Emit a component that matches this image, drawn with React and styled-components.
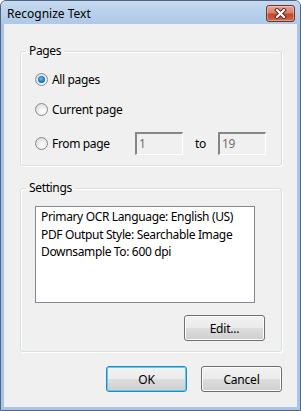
import React from 'react';
import styled, { createGlobalStyle } from 'styled-components';

const GlobalStyle = createGlobalStyle`
  html, body {
    margin: 0;
    padding: 0;
    background: #ffffff;
  }
  body {
    font-family: "Noto Sans", "Liberation Sans", sans-serif;
    font-size: 12px;
    letter-spacing: -0.35px;
    color: #000;
  }
`;

const Window = styled.div`
  box-sizing: border-box;
  width: 301px;
  height: 411px;
  display: flex;
  flex-direction: column;
  border: 1px solid #52677f;
  border-radius: 6px 6px 0 0;
  background: #a9c4e4;
  overflow: hidden;
`;

const TitleBar = styled.div`
  height: 23px;
  flex: none;
  display: flex;
  align-items: flex-start;
  padding: 0 5px 0 6px;
  background: linear-gradient(#c6daf0, #aec8e6);
`;

const Title = styled.div`
  margin-top: 5px;
  font-size: 12px;
  line-height: 16px;
  letter-spacing: 0;
  color: #000;
`;

const CloseButton = styled.button`
  margin: 4px 0 0 auto;
  width: 29px;
  height: 17px;
  padding: 0;
  border: 1px solid #6f342b;
  border-radius: 3px;
  background: linear-gradient(#e6a593 0%, #d77f69 45%, #c4452c 55%, #cf6a50 100%);
  box-shadow: inset 0 0 0 1px rgba(255, 255, 255, 0.35);
  display: flex;
  align-items: center;
  justify-content: center;
`;

const Client = styled.div`
  flex: 1;
  margin: 0 3px 3px 3px;
  padding: 19px 15px 0 16px;
  background: #f0f0f0;
  display: flex;
  flex-direction: column;
`;

const Group = styled.fieldset`
  margin: 0 0 ${p => p.$gap || 0}px 0;
  padding: 0 ${p => p.$padRight || 0}px ${p => p.$padBottom}px 14px;
  border: 1px solid #d5dfe5;
  border-radius: 3px;
  box-shadow: inset 1px 1px 0 #fff, 1px 1px 0 #fff;
  min-width: 0;
`;

// the fieldset's left padding would push the caption inward; pull it back
const Legend = styled.legend`
  margin-left: -9px;
  padding: 0 3px;
  font-size: 12px;
  line-height: 16px;
`;

const Row = styled.div`
  display: flex;
  align-items: center;
  height: ${p => p.$h}px;
  margin-top: ${p => p.$top}px;
`;

const Radio = styled.span`
  box-sizing: border-box;
  width: 13px;
  height: 13px;
  flex: none;
  border-radius: 50%;
  border: 1px solid #8a8b8b;
  background: radial-gradient(circle at 60% 65%, #ffffff 0%, #f1f1f1 35%, #cfcfcf 100%);
  display: flex;
  align-items: center;
  justify-content: center;

  &::after {
    content: '';
    display: ${p => (p.$checked ? 'block' : 'none')};
    width: 7px;
    height: 7px;
    border-radius: 50%;
    background: radial-gradient(circle at 45% 40%, #6fc3f5 0%, #1b86c9 45%, #0b4c86 100%);
  }
`;

const RadioText = styled.span`
  margin-left: 4px;
  width: ${p => (p.$w ? `${p.$w}px` : 'auto')};
  flex: none;
`;

const PageInput = styled.div`
  box-sizing: border-box;
  width: 48px;
  height: 23px;
  padding: 2px 0 0 2px;
  border-style: solid;
  border-width: 2px 1px 1px 2px;
  border-color: #868686 #ffffff #ffffff #868686;
  background: #f0f0f0;
  color: #7a6d6d;
  line-height: 16px;
`;

const ToText = styled.span`
  width: 35px;
  text-align: center;
`;

const ListBox = styled.div`
  box-sizing: border-box;
  width: 220px;
  height: 97px;
  margin-top: 10px;
  padding: 1px 5px;
  border: 1px solid #828790;
  background: #fff;
  line-height: 17.5px;
`;

const EditRow = styled.div`
  display: flex;
  justify-content: flex-end;
  margin-top: 12px;
  padding-right: 2px;
`;

const Button = styled.button`
  box-sizing: border-box;
  width: 81px;
  height: 26px;
  padding: 0;
  font-family: "Noto Sans", "Liberation Sans", sans-serif;
  font-size: 12px;
  letter-spacing: -0.2px;
  color: #000;
  border: 1px solid ${p => (p.$default ? '#3c7fb1' : '#707070')};
  border-radius: 3px;
  background: linear-gradient(#f2f2f2 0%, #ebebeb 50%, #dddddd 51%, #cfcfcf 100%);
  box-shadow: inset 0 0 0 1px ${p => (p.$default ? '#48d5fd' : '#fcfcfc')};
`;

const ButtonRow = styled.div`
  display: flex;
  justify-content: flex-end;
  gap: 14px;
  margin-top: 14px;
`;

function CloseGlyph() {
  return (
    <svg width="13" height="11" viewBox="0 0 13 11">
      <path d="M3 2 L10 9 M10 2 L3 9" stroke="#5a2219" strokeWidth="4" strokeLinecap="square" />
      <path d="M3 2 L10 9 M10 2 L3 9" stroke="#ffffff" strokeWidth="2.2" strokeLinecap="square" />
    </svg>
  );
}

const App = () => {
  return (
    <>
      <GlobalStyle />
      <Window>
        <TitleBar>
          <Title>Recognize Text</Title>
          <CloseButton aria-label="Close">
            <CloseGlyph />
          </CloseButton>
        </TitleBar>
        <Client>
          <Group $padBottom={10} $gap={14}>
            <Legend>Pages</Legend>
            <Row $h={16} $top={12}>
              <Radio $checked />
              <RadioText>All pages</RadioText>
            </Row>
            <Row $h={16} $top={14}>
              <Radio />
              <RadioText>Current page</RadioText>
            </Row>
            <Row $h={23} $top={15}>
              <Radio />
              <RadioText $w={83}>From page</RadioText>
              <PageInput>1</PageInput>
              <ToText>to</ToText>
              <PageInput>19</PageInput>
            </Row>
          </Group>
          <Group $padBottom={10} $padRight={14}>
            <Legend>Settings</Legend>
            <ListBox>
              Primary OCR Language: English (US)
              <br />
              PDF Output Style: Searchable Image
              <br />
              Downsample To: 600 dpi
            </ListBox>
            <EditRow>
              <Button>Edit...</Button>
            </EditRow>
          </Group>
          <ButtonRow>
            <Button $default>OK</Button>
            <Button>Cancel</Button>
          </ButtonRow>
        </Client>
      </Window>
    </>
  );
};

export default App;
